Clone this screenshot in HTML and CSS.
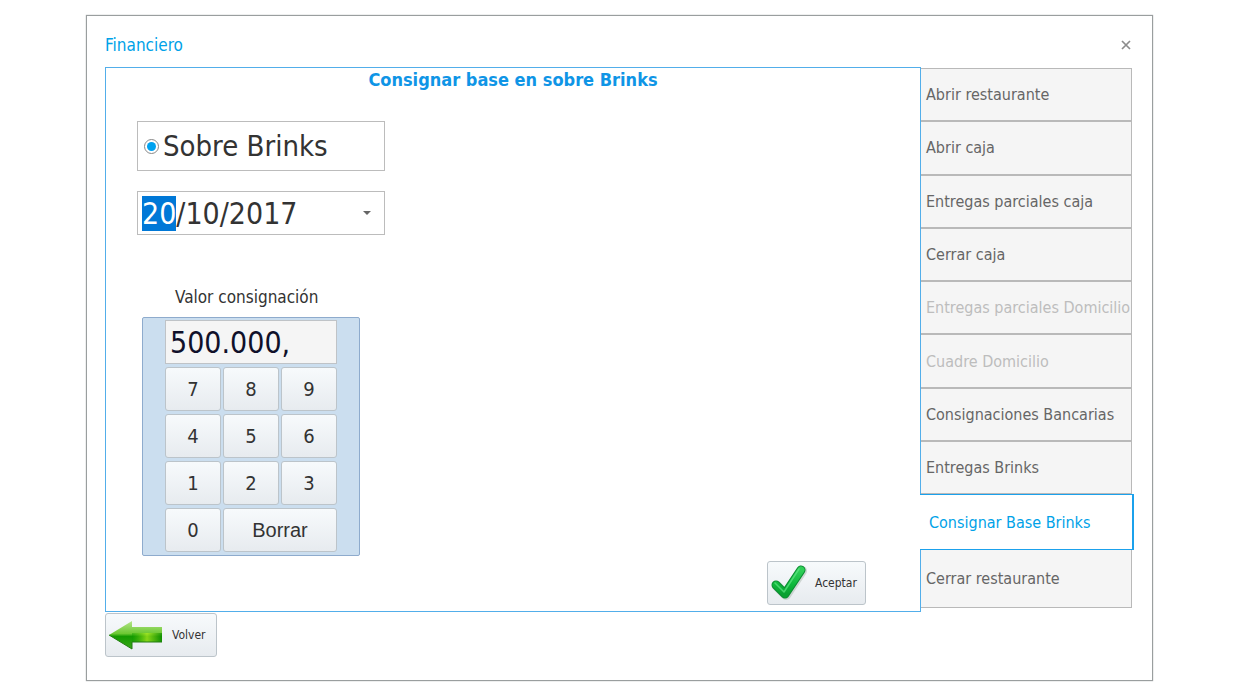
FILE: index.html
```html
<!DOCTYPE html>
<html lang="es">
<head>
    <meta charset="UTF-8">
    <meta name="viewport" content="width=device-width, initial-scale=1.0">
    <title>Financiero</title>
    <link rel="stylesheet" href="styles.css">
</head>
<body>
    <main class="window">
        <header class="window-header">
            <h1>Financiero</h1>
            <button type="button" class="close" aria-label="Cerrar">
                <svg width="10" height="10" viewBox="0 0 10 10" aria-hidden="true">
                    <path d="M1 1 L9 9 M9 1 L1 9" stroke="#8c8c8c" stroke-width="1.7" fill="none"/>
                </svg>
            </button>
        </header>

        <div class="content">
            <section class="panel">
                <h2>Consignar base en sobre Brinks</h2>

                <form class="deposit-form">
                    <label class="field option">
                        <input type="radio" name="tipo" value="sobre" checked>
                        <span>Sobre Brinks</span>
                    </label>

                    <div class="field date-field">
                        <input type="text" id="fecha" value="20/10/2017" aria-label="Fecha">
                        <button type="button" class="date-toggle" aria-label="Abrir calendario"></button>
                    </div>

                    <label class="amount-label" for="valor">Valor consignación</label>
                    <div class="keypad">
                        <input type="text" id="valor" value="500.000,">
                        <button type="button">7</button>
                        <button type="button">8</button>
                        <button type="button">9</button>
                        <button type="button">4</button>
                        <button type="button">5</button>
                        <button type="button">6</button>
                        <button type="button">1</button>
                        <button type="button">2</button>
                        <button type="button">3</button>
                        <button type="button">0</button>
                        <button type="button" class="clear">Borrar</button>
                    </div>
                </form>

                <div class="panel-actions">
                    <button type="button" class="action accept">
                        <svg width="36" height="36" viewBox="0 0 36 36" aria-hidden="true">
                            <defs>
                                <linearGradient id="check" x1="0" y1="0" x2="0" y2="1">
                                    <stop offset="0" stop-color="#30cf58"/>
                                    <stop offset="0.6" stop-color="#0fb83c"/>
                                    <stop offset="1" stop-color="#08a030"/>
                                </linearGradient>
                            </defs>
                            <g fill="none" stroke-linecap="round" stroke-linejoin="round">
                                <path d="M6 21 L15 30 L31 6" stroke="#a9b8ae" stroke-width="10" opacity="0.5"/>
                                <path d="M5 20 L14 29 L30 5" stroke="#0a8a30" stroke-width="9"/>
                                <path d="M5 20 L14 29 L30 5" stroke="url(#check)" stroke-width="7"/>
                                <path d="M4 18 L13 27 L28 4" stroke="#5fe585" stroke-width="1.5" opacity="0.7"/>
                            </g>
                        </svg>
                        <span>Aceptar</span>
                    </button>
                </div>
            </section>

            <nav class="tabs" aria-label="Operaciones">
                <button type="button">Abrir restaurante</button>
                <button type="button">Abrir caja</button>
                <button type="button">Entregas parciales caja</button>
                <button type="button">Cerrar caja</button>
                <button type="button" disabled>Entregas parciales Domicilio</button>
                <button type="button" disabled>Cuadre Domicilio</button>
                <button type="button">Consignaciones Bancarias</button>
                <button type="button">Entregas Brinks</button>
                <button type="button" class="active" aria-current="page">Consignar Base Brinks</button>
                <button type="button" class="last">Cerrar restaurante</button>
            </nav>
        </div>

        <footer class="window-footer">
            <button type="button" class="action back">
                <svg width="54" height="30" viewBox="0 0 54 30" aria-hidden="true">
                    <defs>
                        <linearGradient id="arrow" x1="0" y1="0" x2="0" y2="1">
                            <stop offset="0" stop-color="#b5e58a"/>
                            <stop offset="0.45" stop-color="#6cc832"/>
                            <stop offset="0.55" stop-color="#149a00"/>
                            <stop offset="1" stop-color="#3aa818"/>
                        </linearGradient>
                        <linearGradient id="shaft" x1="0" y1="0" x2="1" y2="0">
                            <stop offset="0" stop-color="#0a9a00" stop-opacity="0.4"/>
                            <stop offset="0.5" stop-color="#b4ee20" stop-opacity="0.7"/>
                            <stop offset="1" stop-color="#0a8a00" stop-opacity="0.7"/>
                        </linearGradient>
                    </defs>
                    <path d="M0 15 L23 1 V7 H53 V22 H23 V29 Z" fill="url(#arrow)"/>
                    <path d="M23 13 H53 V22 H23 Z" fill="url(#shaft)"/>
                    <path d="M0 15 L23 29 V22 H53" fill="none" stroke="#237d12" stroke-width="1"/>
                </svg>
                <span>Volver</span>
            </button>
        </footer>
    </main>

    <script>
        // the day part of the date starts selected
        const fecha = document.getElementById('fecha');
        fecha.focus();
        fecha.setSelectionRange(0, 2);
    </script>
</body>
</html>
```
FILE: styles.css
```css
* {
    box-sizing: border-box;
}

body {
    margin: 0;
    background: #fff;
    color: #333;
    font-family: "DejaVu Sans Condensed", "DejaVu Sans", sans-serif;
    font-stretch: condensed;
}

button, input {
    font-family: inherit;
    font-stretch: inherit;
    color: inherit;
}

h1, h2 {
    margin: 0;
}

.window {
    margin: 15px 87px 15px 86px;
    padding: 0 18px 23px;
    border: 1px solid #9a9e9f;
    box-shadow: 0 0 1px #9a9e9f;
}

.window-header {
    display: flex;
    justify-content: space-between;
    align-items: center;
    height: 51px;
    padding: 6px 0 0;
}

.window-header h1 {
    color: #00a2e8;
    font-size: 17px;
    font-weight: normal;
}

.close {
    display: flex;
    margin-right: 3px;
    padding: 0;
    border: 0;
    background: none;
}

.content {
    display: flex;
}

.panel {
    display: flex;
    flex: 1;
    flex-direction: column;
    border: 1px solid #52aeea;
}

.panel h2 {
    color: #0f95e6;
    font-size: 18px;
    line-height: 24px;
    text-align: center;
}

.deposit-form {
    width: 280px;
    padding: 29px 0 0 31px;
}

.field {
    display: flex;
    align-items: center;
    width: 248px;
    border: 1px solid #bcbcbc;
    font-size: 30px;
}

.option {
    height: 50px;
    padding-left: 6px;
    font-size: 29px;
}

.option input {
    display: grid;
    place-content: center;
    appearance: none;
    width: 15px;
    height: 15px;
    margin: 0 4px 0 0;
    border: 1px solid #888;
    border-radius: 50%;
    background: #fff;
}

.option input::before {
    content: "";
    width: 9px;
    height: 9px;
    border-radius: 50%;
    background: #00a2f0;
}

.date-field {
    height: 44px;
    margin-top: 20px;
}

.date-field input {
    flex: 1;
    min-width: 0;
    padding: 0 0 0 4px;
    border: 0;
    outline: 0;
    background: none;
    font-size: 30px;
}

.date-field input::selection {
    background: #0078d7;
    color: #fff;
}

.date-toggle {
    width: 34px;
    height: 42px;
    padding: 0;
    border: 0;
    background: none;
}

.date-toggle::before {
    content: "";
    display: block;
    width: 0;
    margin: 0 auto;
    border: 4px solid transparent;
    border-top-color: #666;
    border-bottom: 0;
}

.amount-label {
    display: block;
    margin: 50px 0 8px;
    padding-left: 38px;
    font-size: 17px;
    line-height: 24px;
}

.keypad {
    display: grid;
    grid-template-columns: repeat(3, 1fr);
    grid-auto-rows: 44px;
    gap: 3px 2px;
    width: 218px;
    margin-left: 5px;
    padding: 2px 22px 3px;
    border: 1px solid #8eabcd;
    border-radius: 2px;
    background: #cbdeef;
}

.keypad input {
    grid-column: span 3;
    min-width: 0;
    padding: 0 4px;
    border: 1px solid #bfc3c7;
    background: #f5f5f5;
    color: #10102a;
    font-size: 30px;
}

.keypad button,
.action {
    border: 1px solid #bcc4ca;
    border-radius: 3px;
    background: linear-gradient(#f7fafc, #e7ebef);
}

.keypad button {
    padding: 0;
    font-size: 20px;
}

.keypad .clear {
    grid-column: span 2;
    font-family: "Liberation Sans", Arial, sans-serif;
}

.action {
    display: flex;
    align-items: center;
    height: 44px;
    padding: 0 3px;
    font-size: 12px;
}

.panel-actions {
    display: flex;
    justify-content: flex-end;
    margin-top: 5px;
    padding: 0 54px 6px 0;
}

.accept {
    gap: 8px;
    width: 99px;
}

.back {
    gap: 9px;
    width: 112px;
}

.tabs {
    display: flex;
    flex-direction: column;
    width: 211px;
    margin: 1px 2px 4px 0;
}

.tabs button {
    flex: 1 1 51px;
    padding: 0 0 0 5px;
    border: 1px solid #b9b9b9;
    border-left: 0;
    background: #f5f5f5;
    color: #666;
    font-size: 16px;
    text-align: left;
    white-space: nowrap;
}

.tabs button:disabled {
    color: #bdbdbd;
}

.tabs .active {
    flex-basis: 53px;
    margin: 0 -2px 0 -1px;
    padding-left: 9px;
    border: 1px solid #1ba1ec;
    border-right-width: 2px;
    border-left: 0;
    background: #fff;
    color: #00a2e8;
}

.tabs .last {
    flex-basis: 56px;
    border-top: 0;
}

.window-footer {
    padding-top: 1px;
}
```
